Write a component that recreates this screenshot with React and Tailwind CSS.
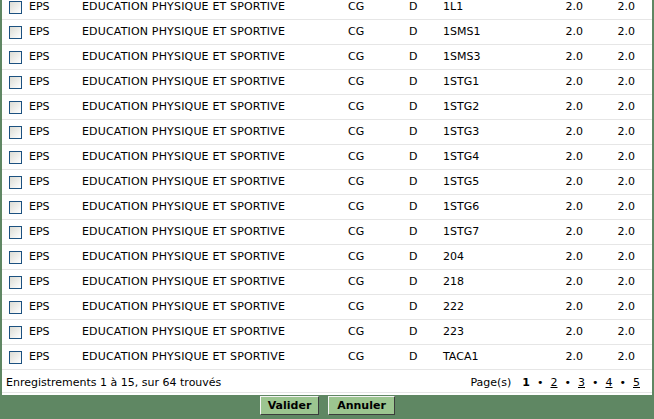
import React from 'react';

const CLASSES = ['1L1', '1SMS1', '1SMS3', '1STG1', '1STG2', '1STG3', '1STG4', '1STG5', '1STG6', '1STG7', '204', '218', '222', '223', 'TACA1'];

function Checkbox() {
  return (
    <span className="block w-[13px] h-[13px] border border-[#1c5180] bg-gradient-to-br from-[#dcdcd4] to-white" />
  );
}

function Row({ classe }) {
  return (
    <div className="flex items-center h-[25px] border-b border-[#e6e6e6]">
      <div className="w-[27px] pl-[7px] shrink-0"><Checkbox /></div>
      <div className="w-[53px] shrink-0">EPS</div>
      <div className="w-[266px] shrink-0 tracking-[0.17px]">EDUCATION PHYSIQUE ET SPORTIVE</div>
      <div className="w-[61px] shrink-0">CG</div>
      <div className="w-[34px] shrink-0">D</div>
      <div className="w-[100px] shrink-0">{classe}</div>
      <div className="w-[40px] shrink-0 text-right">2.0</div>
      <div className="w-[52px] shrink-0 text-right">2.0</div>
    </div>
  );
}

export default function App() {
  return (
    <div className="w-[654px] h-[419px] overflow-hidden bg-[#5f8763] px-[2px] flex flex-col font-['DejaVu_Sans',Verdana,sans-serif] text-[11px] text-black">
      <div className="bg-white flex-1 flex flex-col overflow-hidden">
        <div className="-mt-[5px]">
          {CLASSES.map(c => <Row key={c} classe={c} />)}
        </div>
        <div className="flex items-center justify-between h-[24px] border-b border-[#e6e6e6] pl-[4px] pr-[12px] pt-[5px]">
          <span>Enregistrements 1 à 15, sur 64 trouvés</span>
          <span className="flex items-center gap-[7px]">
            <span className="mr-[4px]">Page(s)</span>
            <b>1</b><span>•</span>
            <span className="underline">2</span><span>•</span>
            <span className="underline">3</span><span>•</span>
            <span className="underline">4</span><span>•</span>
            <span className="underline">5</span>
          </span>
        </div>
        <div className="h-[2px]" />
      </div>
      <div className="h-[24px] shrink-0 flex items-start justify-center gap-[9px] pt-[1px] pl-[1px]">
        <button className="h-[19px] w-[59px] bg-[#9cc590] border border-t-[#f4f4f4] border-l-[#f4f4f4] border-b-[#3c3c3c] border-r-[#3c3c3c] font-bold text-[11px] leading-none">Valider</button>
        <button className="h-[19px] w-[67px] bg-[#9cc590] border border-t-[#f4f4f4] border-l-[#f4f4f4] border-b-[#3c3c3c] border-r-[#3c3c3c] font-bold text-[11px] leading-none">Annuler</button>
      </div>
    </div>
  );
}
